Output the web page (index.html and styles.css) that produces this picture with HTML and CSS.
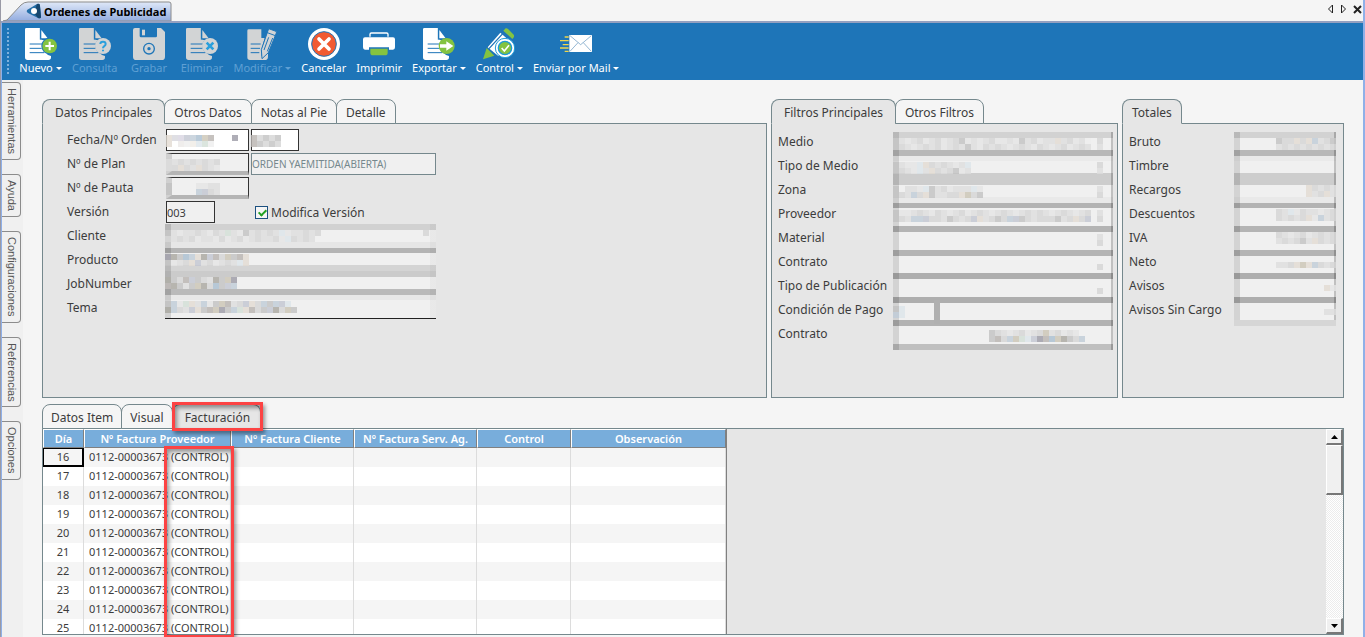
FILE: index.html
```html
<!DOCTYPE html>
<html lang="es">
<head>
    <meta charset="UTF-8">
    <meta name="viewport" content="width=device-width, initial-scale=1.0">
    <title>Ordenes de Publicidad</title>
    <link rel="stylesheet" href="styles.css">
</head>
<body>
    <!-- Iconos compartidos -->
    <svg class="sprite" aria-hidden="true">
        <symbol id="doc" viewBox="0 0 96 96">
            <path fill="currentColor" d="M4 0H45V29Q45 36 52 36H67V80L78 84V88Q78 96 70 96H8Q0 96 0 88V4Q0 0 4 0Z"/>
            <path fill="currentColor" d="M49 6L68 31H49Z"/>
            <path stroke="#1e75b8" stroke-width="3" d="M14 48H52M14 61H50M14 74H58M46 0V35"/>
            <circle cx="74" cy="54" r="25" fill="#1e75b8"/>
        </symbol>
    </svg>

    <div class="window">
        <!-- Barra de título -->
        <header class="titlebar">
            <svg class="title-tab" width="172" height="20" viewBox="0 0 172 20" aria-hidden="true">
                <defs>
                    <linearGradient id="tab-fill" x1="0" y1="0" x2="0" y2="1">
                        <stop offset="0" stop-color="#dfe8f8"/>
                        <stop offset="1" stop-color="#93acdf"/>
                    </linearGradient>
                </defs>
                <path d="M2 20L6 19L20 4Q23 1 27 1H168Q170 1 170 3V20Z" fill="url(#tab-fill)" stroke="#8c8c8c"/>
                <path d="M26 9L36 3Q39 2 39 5L40 16Q40 18 37 17L27 12Q25 11 26 9Z" fill="#246fa8"/>
                <path d="M36 3Q39 2 39 5L40 16Q40 18 37 17L33 12Z" fill="#17476f"/>
                <circle cx="33" cy="10" r="3" fill="#fff"/>
            </svg>
            <h1 class="title">Ordenes de Publicidad</h1>
            <div class="window-buttons">
                <button type="button" aria-label="Anterior"><svg width="7" height="10"><path d="M5.500 1V9L1.500 5Z" fill="none" stroke="#222"/></svg></button>
                <button type="button" aria-label="Siguiente"><svg width="7" height="10"><path d="M1.500 1V9L5.500 5Z" fill="none" stroke="#222"/></svg></button>
                <button type="button" aria-label="Cerrar"><svg width="9" height="10"><path d="M1 2L8 9M8 2L1 9" stroke="#222" stroke-width="2"/></svg></button>
            </div>
        </header>

        <!-- Barra de herramientas -->
        <nav class="toolbar">
            <span class="grip"></span>
            <button type="button" class="tool">
                <svg viewBox="0 0 96 96"><use href="#doc"/><circle cx="74" cy="54" r="22" fill="#84c341"/><path d="M74 41V67M61 54H87" stroke="#fff" stroke-width="6"/></svg>
                <span class="tool-text caret">Nuevo</span>
            </button>
            <button type="button" class="tool" disabled>
                <svg viewBox="0 0 96 96"><use href="#doc"/><circle cx="72" cy="54" r="24" fill="#d2d4d5"/><path d="M64 48Q64 41 72 41T80 48Q80 52 75 55Q72 57 72 61M72 65V70" fill="none" stroke="#2a9fdc" stroke-width="6"/></svg>
                <span class="tool-text">Consulta</span>
            </button>
            <button type="button" class="tool" disabled>
                <svg viewBox="0 0 96 96"><path fill="currentColor" d="M6 0H20V24Q20 28 24 28H68Q72 28 72 24V0H84L96 12V86Q96 96 86 96H10Q0 96 0 86V6Q0 0 6 0Z"/><path fill="currentColor" d="M27 5H36V22H27Z"/><circle cx="48" cy="62" r="16" fill="none" stroke="#1e75b8" stroke-width="4"/><circle cx="48" cy="62" r="5" fill="#1e75b8"/></svg>
                <span class="tool-text">Grabar</span>
            </button>
            <button type="button" class="tool" disabled>
                <svg viewBox="0 0 96 96"><use href="#doc"/><circle cx="72" cy="54" r="24" fill="#d2d4d5"/><path d="M62 44L82 64M82 44L62 64" stroke="#2a9fdc" stroke-width="8"/></svg>
                <span class="tool-text">Eliminar</span>
            </button>
            <button type="button" class="tool" disabled>
                <svg viewBox="0 0 96 96"><path fill="currentColor" d="M8 4H46V30H56L46 66V84L52 80L66 74V86Q66 96 56 96H12Q4 96 4 88V8Q4 4 8 4Z"/><path stroke="#1e75b8" stroke-width="3" d="M14 48H44M14 61H42M14 74H40"/><path d="M68 2L90 10Q92 11 91 15L67 74L48 92L46 65Z" fill="#d2d4d5" stroke="#1e75b8" stroke-width="3"/><path d="M64 14L88 23M68 28L54 66M80 30L64 70" stroke="#1e75b8" stroke-width="3"/></svg>
                <span class="tool-text caret">Modificar</span>
            </button>
            <button type="button" class="tool">
                <svg viewBox="0 0 96 96"><circle cx="48" cy="48" r="48" fill="#fff"/><circle cx="48" cy="48" r="37" fill="#f15a31" stroke="#1e75b8" stroke-width="3"/><path d="M33 33L63 63M63 33L33 63" stroke="#fff" stroke-width="11" stroke-linecap="round"/></svg>
                <span class="tool-text">Cancelar</span>
            </button>
            <button type="button" class="tool">
                <svg viewBox="0 0 96 96"><path d="M21 26V19Q21 15 25 15H71Q75 15 75 19V26" fill="none" stroke="#fff" stroke-width="4"/><path d="M6 28H90Q96 28 96 34V58Q96 65 90 65H78V58H18V65H6Q0 65 0 58V34Q0 28 6 28Z" fill="#fff"/><path d="M22 62H74V74Q74 82 66 82H30Q22 82 22 74Z" fill="#84c341"/></svg>
                <span class="tool-text">Imprimir</span>
            </button>
            <button type="button" class="tool">
                <svg viewBox="0 0 96 96"><use href="#doc"/><circle cx="71" cy="54" r="24" fill="#84c341"/><path d="M51 49H70V40L91 54L70 68V59H51Z" fill="#fff"/></svg>
                <span class="tool-text caret">Exportar</span>
            </button>
            <button type="button" class="tool">
                <svg viewBox="0 0 96 96"><path d="M52 14L84 42L46 84L14 58Z" fill="#fff"/><path d="M62 14L18 62M76 26L40 64" stroke="#1e75b8" stroke-width="4"/><path d="M61 8L68 1Q72 0 76 4L92 20Q95 24 91 30L88 33Z" fill="#84c341"/><path d="M11 60L34 83L0 94Z" fill="#84c341"/><circle cx="66" cy="60" r="29" fill="#fff" stroke="#1e9ad6" stroke-width="3"/><circle cx="66" cy="60" r="20" fill="#84c341" stroke="#1e9ad6" stroke-width="4"/><path d="M56 60L64 69L78 52" fill="none" stroke="#fff" stroke-width="5"/></svg>
                <span class="tool-text caret">Control</span>
            </button>
            <button type="button" class="tool">
                <svg viewBox="0 0 96 96"><path d="M28 21H96V72H28Z" fill="#fff"/><path d="M30 23L62 50L94 23M30 70L54 44M94 70L70 44" fill="none" stroke="#5f93bd" stroke-width="2"/><path d="M14 27H26M0 38H26M8 50H26M0 60H26M14 70H26" stroke="#f0d64c" stroke-width="4"/></svg>
                <span class="tool-text caret">Enviar por Mail</span>
            </button>
        </nav>

        <div class="workspace">
            <!-- Pestañas laterales -->
            <aside class="side-tabs">
                <button type="button">Herramientas</button>
                <button type="button">Ayuda</button>
                <button type="button">Configuraciones</button>
                <button type="button">Referencias</button>
                <button type="button">Opciones</button>
            </aside>

            <main class="content">
                <div class="panels">
                    <section class="panel">
                        <div class="tabs">
                            <button type="button" class="tab active">Datos Principales</button>
                            <button type="button" class="tab">Otros Datos</button>
                            <button type="button" class="tab">Notas al Pie</button>
                            <button type="button" class="tab">Detalle</button>
                        </div>
                        <form class="panel-body form-main">
                            <div class="labels">
                                <label for="fecha">Fecha/Nº Orden</label>
                                <label for="plan">Nº de Plan</label>
                                <label for="pauta">Nº de Pauta</label>
                                <label for="version">Versión</label>
                                <label for="cliente">Cliente</label>
                                <label for="producto">Producto</label>
                                <label for="job">JobNumber</label>
                                <label for="tema">Tema</label>
                            </div>
                            <div class="fields">
                                <div class="row">
                                    <div class="cell short" data-mosaic="ghijklmn   o|g.pqrstq"><input id="fecha" class="box white"></div>
                                    <div class="cell order" data-mosaic="ncbcb|nbcbc"><input class="box white" aria-label="Nº Orden"></div>
                                </div>
                                <div class="row">
                                    <div class="cell short shaded" data-mosaic="ddcdcdcdc|dcgcdgcde"><input id="plan" class="box"></div>
                                    <input class="box status" value="ORDEN YAEMITIDA(ABIERTA)" aria-label="Estado" readonly>
                                </div>
                                <div class="row">
                                    <div class="cell short shaded" data-mosaic="b    eedd|b    kjcd"><input id="pauta" class="box"></div>
                                </div>
                                <div class="row">
                                    <input id="version" class="box tiny" value="003">
                                    <label class="check"><input type="checkbox" checked> Modifica Versión</label>
                                </div>
                                <div class="masked masked-main">
                                    <div class="cell" data-mosaic="bdeddcdecdtdebdcdcdseddcdc                 c|cdcdceddecedcedcddcescdcd"><input id="cliente"></div>
                                    <div class="cell" data-mosaic="oablkgajncmbng|bedcgjdcedcdsg"><input id="producto"></div>
                                    <div class="cell" data-mosaic="abcnjbcdabmo|nabdbmaclbjk"><input id="job"></div>
                                    <div class="cell" data-mosaic="bketgdkebmndcjgckbkjs|akcdjgbnmobktgncbjacmb"><input id="tema"></div>
                                </div>
                            </div>
                        </form>
                    </section>

                    <section class="panel">
                        <div class="tabs">
                            <button type="button" class="tab active">Filtros Principales</button>
                            <button type="button" class="tab">Otros Filtros</button>
                        </div>
                        <form class="panel-body form-side">
                            <div class="labels">
                                <label for="medio">Medio</label>
                                <label for="tipo-medio">Tipo de Medio</label>
                                <label for="zona">Zona</label>
                                <label for="proveedor">Proveedor</label>
                                <label for="material">Material</label>
                                <label for="contrato">Contrato</label>
                                <label for="tipo-pub">Tipo de Publicación</label>
                                <label for="pago">Condición de Pago</label>
                                <label for="contrato2">Contrato</label>
                            </div>
                            <div class="masked masked-side">
                                <div class="cell" data-mosaic="bdedcedcedcbededceedebdceddgdcedq c|bcdedcdcedcdbdecdcdedcdecdedcedcd d"><input id="medio"></div>
                                <div class="cell" data-mosaic="bdeesgcdcdeds                     c|bcdesdgcdcbed                     d"><input id="tipo-medio"></div>
                                <div class="cell" data-mosaic="b ddesbdcedddse                   d|bcdkcgbddccgmcb                   c"><input id="zona"></div>
                                <div class="cell" data-mosaic="beedcdecdedcedcdedcdedcdcdedcdedc d|bcdkkjccdbcdcjgdcbckjbcdcccbdcgcj c"><input id="proveedor"></div>
                                <div class="cell" data-mosaic="                                  d|                                  c"><input id="material"></div>
                                <div class="cell" data-mosaic="                                   |                                  c"><input id="contrato"></div>
                                <div class="cell" data-mosaic="                                   |                                  c"><input id="tipo-pub"></div>
                                <div class="cell split" data-mosaic="bs|ks"><input id="pago"></div>
                                <div class="cell" data-mosaic="                bcdedcedcmdcede|                bnckmtsjonlmabck"><input id="contrato2"></div>
                            </div>
                        </form>
                    </section>

                    <section class="panel">
                        <div class="tabs">
                            <button type="button" class="tab active narrow">Totales</button>
                        </div>
                        <form class="panel-body form-side">
                            <div class="labels">
                                <label for="bruto">Bruto</label>
                                <label for="timbre">Timbre</label>
                                <label for="recargos">Recargos</label>
                                <label for="descuentos">Descuentos</label>
                                <label for="iva">IVA</label>
                                <label for="neto">Neto</label>
                                <label for="avisos">Avisos</label>
                                <label for="sin-cargo">Avisos Sin Cargo</label>
                            </div>
                            <div class="masked masked-side totals">
                                <div class="cell" data-mosaic="       bccgcgkdcb|       dcdcdcdcdc"><input id="bruto"></div>
                                <div class="cell"><input id="timbre"></div>
                                <div class="cell" data-mosaic="            gcdcd|            gdcgd"><input id="recargos"></div>
                                <div class="cell" data-mosaic="       cdsecddedc|       cdcdcgekdc"><input id="descuentos"></div>
                                <div class="cell" data-mosaic="       cdedcedcdc|       dcdcbdgcdc"><input id="iva"></div>
                                <div class="cell" data-mosaic="                 |       ddcgmgkcdc"><input id="neto"></div>
                                <div class="cell" data-mosaic="                 |               ge"><input id="avisos"></div>
                                <div class="cell" data-mosaic="                 |               dd"><input id="sin-cargo"></div>
                            </div>
                        </form>
                    </section>
                </div>

                <!-- Detalle de facturación -->
                <section class="panel detail">
                    <div class="tabs">
                        <button type="button" class="tab">Datos Item</button>
                        <button type="button" class="tab">Visual</button>
                        <button type="button" class="tab active marked">Facturación<span class="marker"></span></button>
                    </div>
                    <div class="panel-body grid-body">
                        <div class="table-area">
                            <table class="grid">
                                <colgroup>
                                    <col class="col-day"><col class="col-supplier"><col class="col-client"><col class="col-service"><col class="col-control"><col class="col-notes">
                                </colgroup>
                                <thead>
                                    <tr><th>Día</th><th>Nº Factura Proveedor</th><th>Nº Factura Cliente</th><th>Nº Factura Serv. Ag.</th><th>Control</th><th>Observación</th></tr>
                                </thead>
                                <tbody>
                                    <tr><td class="selected">16</td><td>0112-00003673 (CONTROL)</td><td></td><td></td><td></td><td></td></tr>
                                    <tr><td>17</td><td>0112-00003673 (CONTROL)</td><td></td><td></td><td></td><td></td></tr>
                                    <tr><td>18</td><td>0112-00003673 (CONTROL)</td><td></td><td></td><td></td><td></td></tr>
                                    <tr><td>19</td><td>0112-00003673 (CONTROL)</td><td></td><td></td><td></td><td></td></tr>
                                    <tr><td>20</td><td>0112-00003673 (CONTROL)</td><td></td><td></td><td></td><td></td></tr>
                                    <tr><td>21</td><td>0112-00003673 (CONTROL)</td><td></td><td></td><td></td><td></td></tr>
                                    <tr><td>22</td><td>0112-00003673 (CONTROL)</td><td></td><td></td><td></td><td></td></tr>
                                    <tr><td>23</td><td>0112-00003673 (CONTROL)</td><td></td><td></td><td></td><td></td></tr>
                                    <tr><td>24</td><td>0112-00003673 (CONTROL)</td><td></td><td></td><td></td><td></td></tr>
                                    <tr><td>25</td><td>0112-00003673 (CONTROL)</td><td></td><td></td><td></td><td></td></tr>
                                </tbody>
                            </table>
                        </div>
                        <div class="scrollbar">
                            <button type="button" aria-label="Subir"><svg width="7" height="4"><path d="M0 4L3.500 0L7 4Z"/></svg></button>
                            <div class="thumb"></div>
                            <button type="button" class="down" aria-label="Bajar"><svg width="7" height="4"><path d="M0 0L3.500 4L7 0Z"/></svg></button>
                        </div>
                        <span class="marker marker-column"></span>
                    </div>
                </section>
            </main>
        </div>
    </div>
    <script src="script.js"></script>
</body>
</html>
```

FILE: styles.css
```css
* {
    margin: 0;
    padding: 0;
    box-sizing: border-box;
}

body {
    font-family: "Trebuchet MS", "Noto Sans", sans-serif;
    font-size: 12px;
    color: #3c3c3c;
    background: #f5f5f5;
    overflow: hidden;
}

button,
input {
    font: inherit;
    color: inherit;
    border: 0;
    background: none;
}

.sprite {
    position: absolute;
    width: 0;
    height: 0;
}

.window {
    display: flex;
    flex-direction: column;
    height: 100vh;
    border-left: 1px solid #9a9aa6;
    border-right: 2px solid #8fb0e8;
}

/* Barra de título */
.titlebar {
    display: flex;
    align-items: center;
    position: relative;
    height: 23px;
    padding: 1px 1px 0 43px;
    border-bottom: 2px solid #94a0c0;
}

.title-tab {
    position: absolute;
    left: 0;
    bottom: 0;
}

.title {
    position: relative;
    font-size: 11px;
    font-weight: 700;
    color: #000;
}

.window-buttons {
    display: flex;
    gap: 6px;
    margin-left: auto;
    padding-bottom: 4px;
}

.window-buttons svg {
    display: block;
}

/* Barra de herramientas */
.toolbar {
    display: flex;
    align-items: flex-start;
    gap: 10px;
    height: 57px;
    padding: 5px 5px 0;
    background: #1e75b8;
    border-left: 1px solid #8fb0e8;
}

.grip {
    width: 2px;
    height: 46px;
    background: repeating-linear-gradient(#7eb0dc 0 2px, transparent 2px 4px);
}

.tool {
    display: flex;
    flex-direction: column;
    align-items: center;
    gap: 1px;
    min-width: 43px;
    color: #fff;
}

.tool svg {
    width: 32px;
    height: 32px;
}

.tool-text {
    font-size: 11px;
    line-height: 14px;
    white-space: nowrap;
}

.tool:disabled {
    color: #d2d4d5;
}

.tool:disabled .tool-text {
    color: #5fa0d4;
}

.caret::after {
    content: "";
    display: inline-block;
    margin-left: 3px;
    vertical-align: 2px;
    border: 3px solid transparent;
    border-top-color: currentColor;
    border-bottom: 0;
}

.workspace {
    flex: 1;
    display: flex;
    min-height: 0;
    border-left: 1px solid #8fb0e8;
}

/* Pestañas laterales */
.side-tabs {
    display: flex;
    flex-direction: column;
    align-items: flex-start;
    gap: 14px;
    width: 21px;
    padding-top: 2px;
    background: #f0f0f0;
}

.side-tabs button {
    width: 19px;
    padding: 5px 0;
    writing-mode: vertical-rl;
    font-family: "Liberation Sans", Arial, sans-serif;
    font-size: 11px;
    line-height: 17px;
    color: #555;
    border: 1px solid #8c8c8c;
    border-left: 0;
    border-radius: 0 4px 4px 0;
}

.content {
    flex: 1;
    display: flex;
    flex-direction: column;
    gap: 6px;
    min-width: 0;
    padding: 19px 19px 2px;
}

.panels {
    display: grid;
    grid-template-columns: 1fr 347px 222px;
    gap: 4px;
}

.panel {
    display: flex;
    flex-direction: column;
}

/* Pestañas */
.tabs {
    display: flex;
    position: relative;
    z-index: 1;
    margin-bottom: -1px;
}

.tab {
    position: relative;
    height: 25px;
    padding: 1px 9px 0;
    border: 1px solid #75888d;
    border-radius: 8px 8px 0 0;
    background: #f5f5f5;
}

.tab + .tab {
    margin-left: -1px;
}

.tab.active {
    padding: 1px 12px 0;
    background: #e6e6e6;
    border-bottom-color: #e6e6e6;
}

.tab.active.narrow {
    padding: 1px 9px 0;
}

.detail .tab {
    padding: 1px 8px 0;
}

.detail .tab.marked {
    padding: 1px 10px 0 12px;
}

.panel-body {
    flex: 1;
    min-height: 275px;
    background: #e6e6e6;
    border: 1px solid #75888d;
}

/* Formularios */
.form-main {
    display: grid;
    grid-template-columns: 99px 270px;
    padding: 4px 24px;
}

.form-side {
    display: grid;
    grid-template-columns: 1fr auto;
    padding: 6px 4px 0 6px;
}

.labels {
    display: flex;
    flex-direction: column;
}

.labels label {
    height: 24px;
    line-height: 24px;
    white-space: nowrap;
}

.row {
    display: flex;
    gap: 2px;
    height: 24px;
    padding-top: 1px;
}

.cell {
    position: relative;
    height: 24px;
}

.cell input {
    width: 100%;
    height: 22px;
}

.box {
    height: 22px;
    font-size: 11px;
    border: 1px solid #333;
    background: #f0f0f0;
}

.white {
    background: #fff;
}

.short {
    width: 83px;
}

.shaded .box {
    border-bottom: 4px solid #b5b5b5;
    border-left: 6px solid #d0d0d0;
}

.order {
    width: 48px;
}

.status {
    flex: 1;
    color: #75888d;
    border-color: #75888d;
    font-size: 10px;
}

.tiny {
    width: 49px;
}

.check {
    display: flex;
    align-items: center;
    gap: 3px;
    margin-left: 38px;
}

.check input {
    appearance: none;
    width: 13px;
    height: 13px;
    border: 1px solid #1c5180;
    background: #f5f5f5;
}

.check input::before {
    content: "";
    display: block;
    width: 3px;
    height: 6px;
    margin: 1px 0 0 4px;
    border: solid #21a121;
    border-width: 0 2px 2px 0;
    transform: rotate(45deg);
}

/* Campos ocultos con mosaico */
.masked {
    display: flex;
    flex-direction: column;
    background-color: #f0f0f0;
}

.masked-main {
    height: 95px;
    margin-left: -1px;
    border-bottom: 1px solid #222;
    background-image:
        linear-gradient(90deg, rgba(0, 0, 0, 0.13) 6px, transparent 6px calc(100% - 6px), rgba(0, 0, 0, 0.03) calc(100% - 6px)),
        linear-gradient(#d1d1d1 6px, #f0f0f0 6px 18px, #e6e6e6 18px 24px, #b4b4b4 24px 29px, #f0f0f0 29px 41px, #d4d4d4 41px 47px, #cbcbcb 47px 53px, #f0f0f0 53px 65px, #bababa 65px 71px, #e8e8e8 71px 76px, #f0f0f0 76px);
}

.masked-side {
    width: 220px;
    height: 218px;
    margin-top: 2px;
    background-image:
        linear-gradient(90deg, rgba(0, 0, 0, 0.12) 6px, transparent 6px calc(100% - 2px), rgba(0, 0, 0, 0.2) calc(100% - 2px)),
        linear-gradient(#d2d2d2 6px, #f0f0f0 6px 18px, #b8b8b8 18px 24px, #eaeaea 24px 29px, #f0f0f0 29px 41px, #cdcdcd 41px 53px, #f0f0f0 53px 65px, #e9e9e9 65px 71px, #b3b3b3 71px 76px, #f0f0f0 76px 94px, #b4b4b4 94px 100px, #f0f0f0 100px 118px, #b4b4b4 118px 124px, #f0f0f0 124px 141px, #aeaeae 141px 147px, #f0f0f0 147px 165px, #aeaeae 165px 171px, #f0f0f0 171px 188px, #b2b2b2 188px 194px, #f0f0f0 194px 212px, #bfbfbf 212px);
}

.masked-side.totals {
    width: 102px;
    height: 194px;
    margin-right: 3px;
    border-bottom: 6px solid #d6d6d6;
}

.mosaic {
    position: absolute;
    left: 0;
    top: 6px;
    opacity: 0.8;
    pointer-events: none;
}

.split::before {
    content: "";
    position: absolute;
    left: 41px;
    top: 0;
    width: 6px;
    height: 24px;
    background: #b0b0b0;
}

/* Grilla */
.detail {
    flex: 1;
    min-height: 0;
}

.grid-body {
    display: flex;
    position: relative;
    min-height: 0;
}

.table-area {
    flex: 1;
    overflow: hidden;
}

.grid {
    width: 684px;
    table-layout: fixed;
    border-collapse: separate;
    border-spacing: 0;
    border-right: 1px solid #808080;
    font-size: 11px;
}

.col-day { width: 41px; }
.col-supplier { width: 147px; }
.col-client { width: 123px; }
.col-service { width: 123px; }
.col-control { width: 94px; }

.grid th {
    height: 19px;
    line-height: 16px;
    color: #fff;
    font-weight: 600;
    background: #78addb;
    border: 1px solid #fff;
    border-right-color: #808080;
    border-bottom-color: #808080;
    white-space: nowrap;
}

.grid td {
    height: 19px;
    padding: 0 0 2px 5px;
    line-height: 17px;
    background: #fff;
    border-right: 1px solid #dcdcdc;
    white-space: nowrap;
}

.grid tr:nth-child(odd) td {
    background: #f5f5f5;
}

.grid td:first-child {
    padding-left: 0;
    text-align: center;
}

.grid td.selected {
    padding-bottom: 0;
    border: 1px solid #000;
    border-width: 1px 2px 2px 1px;
    line-height: 16px;
}

.scrollbar {
    display: flex;
    flex-direction: column;
    width: 17px;
    background: repeating-conic-gradient(#ececec 0 25%, #fff 0 50%) 0 0 / 2px 2px;
}

.scrollbar button,
.thumb {
    display: flex;
    align-items: center;
    justify-content: center;
    height: 16px;
    background: #f0f0f0;
    border: 1px solid #fff;
    border-right: 2px solid #777;
    border-bottom: 2px solid #777;
}

.thumb {
    height: 50px;
}

.scrollbar .down {
    margin-top: auto;
}

/* Recuadros rojos de resaltado */
.marker {
    position: absolute;
    inset: -3px -3px -3px -1px;
    border: 3px solid #fc4343;
    box-shadow: 2px 3px 4px rgba(0, 0, 0, 0.4), inset 2px 3px 4px rgba(0, 0, 0, 0.4);
    pointer-events: none;
}

.marker-column {
    left: 121px;
    top: 17px;
    right: auto;
    bottom: -4px;
    width: 70px;
}
```

FILE: script.js
```javascript
// Colores de cada bloque del mosaico
const palette = {
    a: '#a9a7a0', b: '#c2c2c2', c: '#d5d5d5', d: '#dedede', e: '#e6e6e6',
    g: '#e3dcd3', h: '#d8d8de', i: '#d9d5e2', j: '#c3c6d2', k: '#c0ccd8',
    l: '#aabfd0', m: '#cbc5b5', n: '#b8b3b0', o: '#9c9ba6', p: '#ece9e8',
    q: '#eeeeee', r: '#f0ece6', s: '#dde5ea', t: '#d3dfd6'
};
const size = 6;

document.querySelectorAll('[data-mosaic]').forEach(cell => {
    const svg = document.createElementNS('http://www.w3.org/2000/svg', 'svg');
    const rows = cell.dataset.mosaic.split('|');
    svg.setAttribute('class', 'mosaic');
    svg.setAttribute('width', Math.max(...rows.map(row => row.length)) * size);
    svg.setAttribute('height', rows.length * size);
    rows.forEach((row, y) => {
        [...row].forEach((key, x) => {
            if (!palette[key]) return;
            const rect = document.createElementNS('http://www.w3.org/2000/svg', 'rect');
            rect.setAttribute('x', x * size);
            rect.setAttribute('y', y * size);
            rect.setAttribute('width', size);
            rect.setAttribute('height', size);
            rect.setAttribute('fill', palette[key]);
            svg.appendChild(rect);
        });
    });
    cell.appendChild(svg);
});
```
